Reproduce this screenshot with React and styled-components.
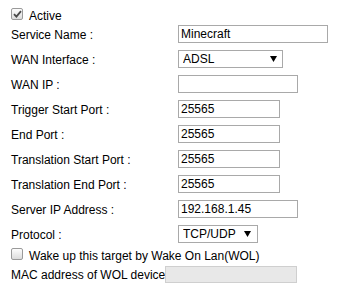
import React from "react";
import styled, { createGlobalStyle } from "styled-components";

const Global = createGlobalStyle`
  html, body { margin: 0; padding: 0; background: #fff; }
  body { font-family: Arial, "Liberation Sans", sans-serif; font-size: 12px; color: #000; }
`;

const Form = styled.div`
  padding: 8px 0 0 11px;
  width: 352px;
  box-sizing: border-box;
`;

const CheckRow = styled.label`
  display: flex;
  align-items: flex-start;
  gap: 6px;
  height: 14px;
  margin-top: ${(p) => p.$mt || 0}px;
  line-height: 14px;
`;

const Box = styled.span`
  width: 10px;
  height: 10px;
  border: 1px solid #9a9a9a;
  border-radius: 2px;
  background: linear-gradient(#fdfdfd, #dcdcdc);
  display: flex;
  align-items: center;
  justify-content: center;
  flex: none;
  box-sizing: content-box;
  svg { display: block; }
`;

const Text = styled.span`
  padding-top: 1px;
`;

const Grid = styled.div`
  display: grid;
  grid-template-columns: 167px auto;
  grid-auto-rows: 18px;
  row-gap: 7px;
  align-items: center;
  margin-top: 3px;
`;

const Label = styled.div`
  white-space: nowrap;
  padding-top: 1px;
`;

const Input = styled.input`
  box-sizing: border-box;
  width: ${(p) => p.$w}px;
  height: 18px;
  margin: 0;
  padding: 0 2px 0 2px;
  border: 1px solid #a9a9a9;
  font: 12px Arial, "Liberation Sans", sans-serif;
  color: #000;
  background: #fff;
  outline: none;
`;

const SelectWrap = styled.div`
  position: relative;
  width: ${(p) => p.$w}px;
  height: 18px;
`;

const Select = styled.select`
  appearance: none;
  -webkit-appearance: none;
  box-sizing: border-box;
  width: 100%;
  height: 18px;
  margin: 0;
  padding: 0 0 0 4px;
  border: 1px solid #a9a9a9;
  border-radius: 0;
  background: #fff;
  font: 12px Arial, "Liberation Sans", sans-serif;
  color: #000;
  outline: none;
`;

const Arrow = styled.svg`
  position: absolute;
  right: ${(p) => p.$r}px;
  top: 6px;
  pointer-events: none;
`;

const MacRow = styled.div`
  display: flex;
  align-items: center;
  margin-top: 4px;
  height: 17px;
  white-space: nowrap;
`;

const DisabledInput = styled.input`
  box-sizing: border-box;
  width: 132px;
  height: 17px;
  margin: 0;
  padding: 0;
  border: 1px solid #cfcfcf;
  background: #e8e8e8;
`;

function Check({ checked }) {
  return (
    <Box>
      {checked && (
        <svg width="9" height="8" viewBox="0 0 9 8">
          <path d="M1 4.2 L3.4 6.6 L8 1.2" fill="none" stroke="#4a4a4a" strokeWidth="1.8" />
        </svg>
      )}
    </Box>
  );
}

function Sel({ w, r, value, options }) {
  return (
    <SelectWrap $w={w}>
      <Select defaultValue={value}>
        {options.map((o) => (
          <option key={o}>{o}</option>
        ))}
      </Select>
      <Arrow $r={r} width="7" height="6" viewBox="0 0 7 6">
        <path d="M0 0 H7 L3.5 6 Z" fill="#000" />
      </Arrow>
    </SelectWrap>
  );
}

const rows = [
  ["Service Name :", <Input $w={150} defaultValue="Minecraft" />],
  ["WAN Interface :", <Sel w={105} r={6} value="ADSL" options={["ADSL", "VDSL", "Ethernet"]} />],
  ["WAN IP :", <Input $w={120} defaultValue="" />],
  ["Trigger Start Port :", <Input $w={102} defaultValue="25565" />],
  ["End Port :", <Input $w={102} defaultValue="25565" />],
  ["Translation Start Port :", <Input $w={102} defaultValue="25565" />],
  ["Translation End Port :", <Input $w={102} defaultValue="25565" />],
  ["Server IP Address :", <Input $w={120} defaultValue="192.168.1.45" />],
  ["Protocol :", <Sel w={80} r={7} value="TCP/UDP" options={["TCP/UDP", "TCP", "UDP"]} />],
];

export default function App() {
  return (
    <>
      <Global />
      <Form>
        <CheckRow>
          <Check checked />
          <Text>Active</Text>
        </CheckRow>
        <Grid>
          {rows.map(([l, c]) => (
            <React.Fragment key={l}>
              <Label>{l}</Label>
              <div>{c}</div>
            </React.Fragment>
          ))}
        </Grid>
        <CheckRow $mt={5}>
          <Check />
          <Text>Wake up this target by Wake On Lan(WOL)</Text>
        </CheckRow>
        <MacRow>
          <span>MAC address of WOL device</span>
          <DisabledInput disabled />
        </MacRow>
      </Form>
    </>
  );
}
